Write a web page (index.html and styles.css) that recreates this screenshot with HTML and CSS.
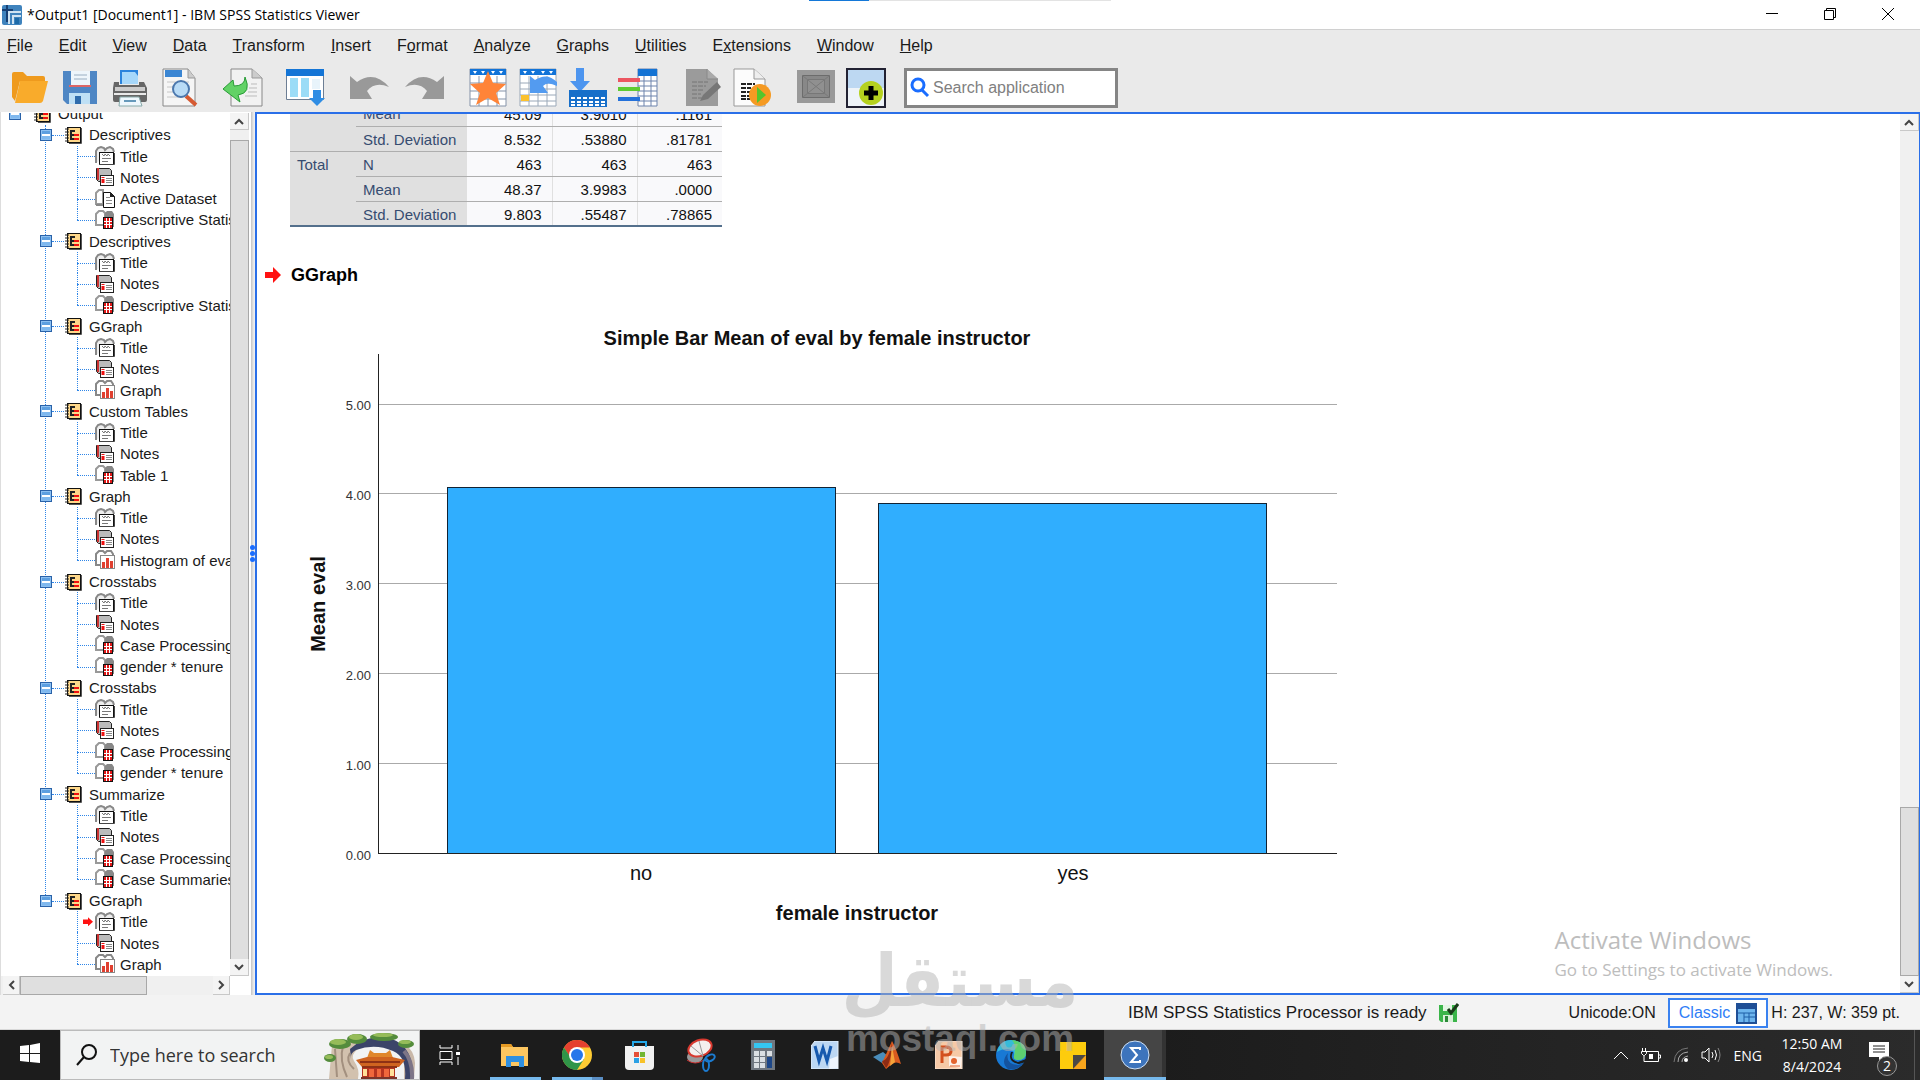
FILE: index.html
```html
<!DOCTYPE html>
<html lang="en">
<head>
<meta charset="utf-8">
<meta name="viewport" content="width=device-width, initial-scale=1">
<title>*Output1 [Document1] - IBM SPSS Statistics Viewer</title>
<link rel="stylesheet" href="styles.css">
</head>
<body>

<!-- icons shared by the outline rows -->
<svg class="defs" width="0" height="0">
  <symbol id="i-book" viewBox="0 0 18 18">
    <rect x="2" y="1" width="14" height="16" fill="#111"/><rect x="3" y="2" width="12" height="14" fill="#ffd88a"/>
    <path d="M16.500 2v15.500H4" fill="none" stroke="#555"/>
    <path d="M0 3h4M0 6h4M0 9h4M0 12h4M0 15h4" stroke="#222"/>
    <path d="M10 5H6v8h4M6 9h3" fill="none" stroke="#222" stroke-width="2"/>
    <path d="M9 8h5v2H9zM9 12h5v2H9z" fill="#f01010"/>
  </symbol>
  <symbol id="i-title" viewBox="0 0 20 20">
    <path d="M1 17V5l2-3 3-1 3 1 1 2 2-2 3-1 3 2 1 3" fill="#eee" stroke="#888" stroke-width="2"/>
    <rect x="4.500" y="6.500" width="14" height="12" fill="#fff" stroke="#111"/>
    <path d="M4 18.500h15.500V7" fill="none" stroke="#444"/>
    <path d="M7 8l2 2 1-2 2 2 1-2 2 2" fill="none" stroke="#777"/><path d="M7 12.500h9M7 15.500h6" stroke="#777"/>
  </symbol>
  <symbol id="i-notes" viewBox="0 0 20 20">
    <path d="M1.500 1.500h13l2 2v11h-13l-2-2z" fill="#bbb" stroke="#222"/><path d="M3 1v12" stroke="#c33" stroke-width="2"/>
    <rect x="5.500" y="8.500" width="13" height="10" fill="#fff" stroke="#222"/>
    <path d="M8 10v1M8 12v4" stroke="#e11" stroke-width="3"/><path d="M11 11.500h6M11 13.500h6M11 15.500h6" stroke="#888"/>
  </symbol>
  <symbol id="i-data" viewBox="0 0 20 20">
    <path d="M1 15V4l3-3h4v14z" fill="#fff" stroke="#999" stroke-width="2"/><path d="M1 16h7" stroke="#888" stroke-width="2"/>
    <path d="M8.500 3.500h7l4 4v11h-11z" fill="#fff" stroke="#111"/><path d="M15 3v5h5z" fill="#222"/>
    <path d="M11 8.500h4M11 11.500h6M11 14.500h6" stroke="#888"/>
  </symbol>
  <symbol id="i-table" viewBox="0 0 20 20">
    <path d="M1 15V4l3-3h4l2 2v12z" fill="#fff" stroke="#999" stroke-width="2"/><path d="M10 3l2-2h5l2 3v13h-9z" fill="#888"/>
    <rect x="8.500" y="7.500" width="9" height="11" fill="#e01818" stroke="#111"/>
    <path d="M9 11.500h8M9 14.500h8M11.500 8v10M14.500 8v10" stroke="#fff"/>
  </symbol>
  <symbol id="i-graph" viewBox="0 0 20 20">
    <path d="M1 15V4l3-3h4l2 2 2-2h4l2 3v11z" fill="#fff" stroke="#888" stroke-width="2"/>
    <rect x="5.500" y="5.500" width="14" height="13" fill="#fff" stroke="#888"/>
    <path d="M7 12h3v6H7zM11 8h3v10h-3zM15 11h3v7h-3z" fill="#e04030"/>
  </symbol>
</svg>

<header class="titlebar">
  <svg class="app-icon" width="20" height="20" viewBox="0 0 20 20"><rect width="20" height="20" rx="2" fill="#3f83bd"/><path d="M0 5h11M5 0v17" stroke="#173f73" stroke-width="2"/><path d="M7 19V7h12M11 19v-8h8" fill="none" stroke="#cfe3f2" stroke-width="2"/><path d="M15 13v6" stroke="#1c6aa8" stroke-width="4"/></svg>
  <h1>*Output1 [Document1] - IBM SPSS Statistics Viewer</h1>
  <div class="progress"><span></span></div>
  <div class="window-buttons">
    <button type="button" aria-label="Minimize"><svg width="12" height="12"><path d="M0 5.500h12" stroke="#000"/></svg></button>
    <button type="button" aria-label="Restore"><svg width="12" height="12"><path d="M.5 2.500h9v9h-9zM2.500 2V.5h9v9H10" fill="none" stroke="#000"/></svg></button>
    <button type="button" aria-label="Close"><svg width="12" height="12"><path d="M0 0l12 12M12 0L0 12" stroke="#000"/></svg></button>
  </div>
</header>

<nav class="menubar">
  <a href="#"><u>F</u>ile</a><a href="#"><u>E</u>dit</a><a href="#"><u>V</u>iew</a><a href="#"><u>D</u>ata</a><a href="#"><u>T</u>ransform</a><a href="#"><u>I</u>nsert</a><a href="#">F<u>o</u>rmat</a><a href="#"><u>A</u>nalyze</a><a href="#"><u>G</u>raphs</a><a href="#"><u>U</u>tilities</a><a href="#">E<u>x</u>tensions</a><a href="#"><u>W</u>indow</a><a href="#"><u>H</u>elp</a>
</nav>

<div class="toolbar">
  <div class="group">
    <button type="button" aria-label="Open"><svg viewBox="0 0 40 40"><path d="M2 6q0-2 2-2h9l4 4h16q2 0 2 2v3H10L5 33 2 29z" fill="#ef9a1d"/><path d="M10 13h28l-5 20q-1 2-3 2H5z" fill="#f9ab2b"/></svg></button>
    <button type="button" aria-label="Save"><svg viewBox="0 0 40 40"><path d="M3 3h34v33H7l-4-4z" fill="#4e86c4"/><path d="M11 3h19v14H11z" fill="#eef5fb"/><path d="M14 7h13M14 11h13" stroke="#9aaec2"/><path d="M9 18h22" stroke="#d66" stroke-width="2"/><path d="M9 25h21v11H9z" fill="#bfe0f5"/><path d="M15 28h6v8h-6z" fill="#2f6cac"/></svg></button>
    <button type="button" aria-label="Print"><svg viewBox="0 0 40 40"><path d="M10 2h18v14H10z" fill="#2b83dc"/><path d="M12 4h13l3 4v8H12z" fill="#a6d7fa"/><path d="M4 14h5v3h20v-3h5l3 6v12q0 2-2 2H5q-2 0-2-2V20z" fill="#666"/><path d="M5 19h30v4H5z" fill="#ccc"/><path d="M4 25h32v2H4z" fill="#e9e9e9"/><path d="M10 29h19l3 9H9z" fill="#eef7fd" stroke="#8aa"/><path d="M14 33h12" stroke="#69b" stroke-width="2"/></svg></button>
    <button type="button" aria-label="Print Preview"><svg viewBox="0 0 40 40"><path d="M3 1h25l7 9v28H3z" fill="#f5f5f5" stroke="#888"/><path d="M28 1v9h7" fill="#ccc" stroke="#999"/><path d="M5 2h17v7H5z" fill="#3b86d3"/><path d="M7 14h22M7 19h22M7 24h20M7 29h16" stroke="#c6c6c6"/><path d="M26 28l10 9" stroke="#d65a32" stroke-width="4"/><circle cx="21" cy="21" r="8" fill="#b9dbf6" stroke="#4b77ad" stroke-width="2"/></svg></button>
  </div>
  <div class="group">
    <button type="button" aria-label="Export"><svg viewBox="0 0 40 40"><path d="M8 1h21l10 9v28H8z" fill="#f2f2f2" stroke="#888"/><path d="M29 1v9h10" fill="#ccc" stroke="#999"/><path d="M28 16h6M26 20h8M25 24h9M22 28h12" stroke="#bbb"/><path d="M22 9q7 16-7 18l2 7L0 21l10-9 1 6q11 0 11-9z" fill="#62d266" stroke="#289b36"/></svg></button>
  </div>
  <div class="group">
    <button type="button" aria-label="Recall Dialogs"><svg viewBox="0 0 40 40"><path d="M.5 1.500h37v30h-37z" fill="#fff" stroke="#6d7e94"/><path d="M0 1h38v7H0z" fill="#1475d6"/><path d="M4 10h8v19H4zM15 10h8v19h-8z" fill="#9bdcf7"/><path d="M26 11h8v10h-8z" fill="#e8f4fb"/><path d="M27 22h8v8h4l-8 8-8-8h4z" fill="#2f8de4"/></svg></button>
  </div>
  <div class="group wide">
    <button type="button" aria-label="Undo"><svg viewBox="0 0 40 40"><path d="M1 8l7 6q17-12 32 5-14-6-22 4l5 8H1z" fill="#999"/></svg></button>
    <button type="button" aria-label="Redo"><svg viewBox="0 0 40 40"><path d="M39 8l-7 6Q15 2 0 19q14-6 22 4l-5 8h22z" fill="#999"/></svg></button>
  </div>
  <div class="group">
    <button type="button" aria-label="Go to Data"><svg viewBox="0 0 40 40"><path d="M2 1h36v37H2z" fill="#fff" stroke="#8593a8"/><path d="M11 8v30M20 8v30M29 8v30M2 15h36M2 23h36M2 31h36" stroke="#8593a8"/><path d="M2 1h36v6H2z" fill="#1173d8"/><path d="M5 3h4l-2 3zM13 3h4l-2 3zM23 3h4l-2 3zM31 3h4l-2 3z" fill="#fff"/><path d="M20 3l5 12 13 1-10 9 4 12-12-7-12 7 4-12-10-9 13-1z" fill="#ff8438"/></svg></button>
    <button type="button" aria-label="Go to Case"><svg viewBox="0 0 40 40"><path d="M2 1h36v37H2z" fill="#fff" stroke="#9aa8b8"/><path d="M11 8v30M20 8v30M29 8v30M2 15h36M2 21h36M2 27h36M2 33h36" stroke="#9aa8b8"/><path d="M2 1h36v6H2z" fill="#1173d8"/><path d="M5 3h4l-2 3zM13 3h4l-2 3zM23 3h4l-2 3zM31 3h4l-2 3z" fill="#fff"/><path d="M12 8l5 4q12-8 22 2v4q-10-5-14 0l5 7H12z" fill="#539bf0"/><path d="M3 27h8v6H3z" fill="#fbc12e"/></svg></button>
    <button type="button" aria-label="Variables"><svg viewBox="0 0 40 40"><path d="M8 0h8v13h6L12 24 2 13h6z" fill="#4d95ef"/><path d="M1 22h38v17H1z" fill="#176fc9"/><path d="M3 30h34M3 34h34M3 37h34" stroke="#fff" stroke-width="2" stroke-dasharray="4 2"/></svg></button>
    <button type="button" aria-label="Use Sets"><svg viewBox="0 0 40 40"><path d="M20 1h19v37H20z" fill="#fff" stroke="#6d83ac"/><path d="M26 8v30M33 8v30M20 13h19M20 18h19M20 23h19M20 28h19M20 33h19" stroke="#6d83ac"/><path d="M20 1h19v7H20z" fill="#1473d4"/><path d="M0 10h22v4H0z" fill="#ec5661"/><path d="M0 19h22v4H0z" fill="#5ecb32"/><path d="M0 29h22v4H0z" fill="#2471da"/></svg></button>
  </div>
  <div class="group last">
    <button type="button" aria-label="Edit Output"><svg viewBox="0 0 40 40"><path d="M3 1h21l11 10v27H3z" fill="#9b9b9b"/><path d="M24 1v10h11" fill="#aaa" stroke="#888"/><path d="M9 14h16M9 18h14M9 22h11M9 26h9M9 30h10" stroke="#757575" stroke-dasharray="5 1"/><path d="M34 14l4 5-13 12-8 2 3-6z" fill="#777"/></svg></button>
    <button type="button" aria-label="Run Script"><svg viewBox="0 0 40 40"><path d="M1 1h20l11 10v27H1z" fill="#fcfcfc" stroke="#999"/><path d="M21 1v10h11" fill="#eee" stroke="#999"/><path d="M8 16h14M8 20h10M8 24h10M8 28h9M8 31h9" stroke="#222" stroke-width="2" stroke-dasharray="5 1"/><circle cx="27" cy="27" r="11" fill="#f59a23"/><path d="M24 19l9 8-9 8z" fill="#55c52c"/></svg></button>
  </div>
  <div class="group">
    <button type="button" aria-label="Select Last Output"><svg viewBox="0 0 40 40"><path d="M1 2h38v33H1z" fill="#999"/><path d="M6.500 7.500h27v22h-27z" fill="#888" stroke="#6c6c6c"/><path d="M11.500 11.500h17v14h-17z" fill="#909090" stroke="#777"/><path d="M7 8l26 21M33 8L7 29" stroke="#7a7a7a"/></svg></button>
    <button type="button" aria-label="Designate Window"><svg viewBox="0 0 40 40"><path d="M1 1h38v38H1z" fill="#eef3f8"/><path d="M1 1h38v19H1z" fill="#bdd8f2"/><circle cx="25" cy="25" r="12" fill="#b5d11e"/><path d="M25 18v14M18 25h14" stroke="#000" stroke-width="5"/><path d="M1 1h38v38H1z" fill="none" stroke="#223" stroke-width="2"/></svg></button>
  </div>
  <label class="app-search">
    <svg width="22" height="22" viewBox="0 0 22 22"><circle cx="9" cy="8" r="6" fill="none" stroke="#1a6dff" stroke-width="3"/><path d="M13 13l6 6" stroke="#1a6dff" stroke-width="3"/></svg>
    <input type="text" placeholder="Search application" aria-label="Search application">
  </label>
</div>

<div class="workspace">
  <aside class="outline">
    <ul class="tree">
      <li class="root"><button type="button" class="toggle" aria-label="Collapse"></button><svg><use href="#i-book"/></svg>Output</li>
      <li class="branch"><button type="button" class="toggle" aria-label="Collapse"></button><svg><use href="#i-book"/></svg>Descriptives</li>
      <li class="leaf"><svg><use href="#i-title"/></svg>Title</li>
      <li class="leaf"><svg><use href="#i-notes"/></svg>Notes</li>
      <li class="leaf"><svg><use href="#i-data"/></svg>Active Dataset</li>
      <li class="leaf end"><svg><use href="#i-table"/></svg>Descriptive Statistics</li>
      <li class="branch"><button type="button" class="toggle" aria-label="Collapse"></button><svg><use href="#i-book"/></svg>Descriptives</li>
      <li class="leaf"><svg><use href="#i-title"/></svg>Title</li>
      <li class="leaf"><svg><use href="#i-notes"/></svg>Notes</li>
      <li class="leaf end"><svg><use href="#i-table"/></svg>Descriptive Statistics</li>
      <li class="branch"><button type="button" class="toggle" aria-label="Collapse"></button><svg><use href="#i-book"/></svg>GGraph</li>
      <li class="leaf"><svg><use href="#i-title"/></svg>Title</li>
      <li class="leaf"><svg><use href="#i-notes"/></svg>Notes</li>
      <li class="leaf end"><svg><use href="#i-graph"/></svg>Graph</li>
      <li class="branch"><button type="button" class="toggle" aria-label="Collapse"></button><svg><use href="#i-book"/></svg>Custom Tables</li>
      <li class="leaf"><svg><use href="#i-title"/></svg>Title</li>
      <li class="leaf"><svg><use href="#i-notes"/></svg>Notes</li>
      <li class="leaf end"><svg><use href="#i-table"/></svg>Table 1</li>
      <li class="branch"><button type="button" class="toggle" aria-label="Collapse"></button><svg><use href="#i-book"/></svg>Graph</li>
      <li class="leaf"><svg><use href="#i-title"/></svg>Title</li>
      <li class="leaf"><svg><use href="#i-notes"/></svg>Notes</li>
      <li class="leaf end"><svg><use href="#i-graph"/></svg>Histogram of eval</li>
      <li class="branch"><button type="button" class="toggle" aria-label="Collapse"></button><svg><use href="#i-book"/></svg>Crosstabs</li>
      <li class="leaf"><svg><use href="#i-title"/></svg>Title</li>
      <li class="leaf"><svg><use href="#i-notes"/></svg>Notes</li>
      <li class="leaf"><svg><use href="#i-table"/></svg>Case Processing Summary</li>
      <li class="leaf end"><svg><use href="#i-table"/></svg>gender * tenure</li>
      <li class="branch"><button type="button" class="toggle" aria-label="Collapse"></button><svg><use href="#i-book"/></svg>Crosstabs</li>
      <li class="leaf"><svg><use href="#i-title"/></svg>Title</li>
      <li class="leaf"><svg><use href="#i-notes"/></svg>Notes</li>
      <li class="leaf"><svg><use href="#i-table"/></svg>Case Processing Summary</li>
      <li class="leaf end"><svg><use href="#i-table"/></svg>gender * tenure</li>
      <li class="branch"><button type="button" class="toggle" aria-label="Collapse"></button><svg><use href="#i-book"/></svg>Summarize</li>
      <li class="leaf"><svg><use href="#i-title"/></svg>Title</li>
      <li class="leaf"><svg><use href="#i-notes"/></svg>Notes</li>
      <li class="leaf"><svg><use href="#i-table"/></svg>Case Processing Summary</li>
      <li class="leaf end"><svg><use href="#i-table"/></svg>Case Summaries</li>
      <li class="branch"><button type="button" class="toggle" aria-label="Collapse"></button><svg><use href="#i-book"/></svg>GGraph</li>
      <li class="leaf current"><svg><use href="#i-title"/></svg>Title</li>
      <li class="leaf"><svg><use href="#i-notes"/></svg>Notes</li>
      <li class="leaf end"><svg><use href="#i-graph"/></svg>Graph</li>
    </ul>
    <div class="scroll-v">
      <button type="button" aria-label="Scroll up"><svg width="10" height="7"><path d="M1 6l4-4 4 4" /></svg></button>
      <div class="track"><div class="thumb" style="height:99%;margin-top:10px"></div></div>
      <button type="button" aria-label="Scroll down"><svg width="10" height="7"><path d="M1 1l4 4 4-4" /></svg></button>
    </div>
    <div class="scroll-h">
      <button type="button" aria-label="Scroll left"><svg width="7" height="10"><path d="M6 1L2 5l4 4" /></svg></button>
      <div class="track"><div class="thumb" style="width:66%"></div></div>
      <button type="button" aria-label="Scroll right"><svg width="7" height="10"><path d="M1 1l4 4-4 4" /></svg></button>
    </div>
  </aside>

  <div class="splitter"><i></i><i></i><i></i></div>

  <main class="viewer">
    <div class="output">
      <table class="report">
        <tbody>
          <tr><th rowspan="2"></th><th>Mean</th><td>45.09</td><td>3.9010</td><td>.1161</td></tr>
          <tr><th>Std. Deviation</th><td>8.532</td><td>.53880</td><td>.81781</td></tr>
          <tr><th rowspan="3">Total</th><th>N</th><td>463</td><td>463</td><td>463</td></tr>
          <tr><th>Mean</th><td>48.37</td><td>3.9983</td><td>.0000</td></tr>
          <tr><th>Std. Deviation</th><td>9.803</td><td>.55487</td><td>.78865</td></tr>
        </tbody>
      </table>

      <h2><svg width="16" height="16"><path d="M0 5h8V0l8 8-8 8v-5H0z" fill="#f11"/></svg>GGraph</h2>

      <svg class="chart" width="1060" height="610" viewBox="0 0 1060 610">
        <text class="chart-title" x="527" y="22">Simple Bar Mean of eval by female instructor</text>
        <g class="gridlines"><path d="M89 81.500h958M89 170.500h958M89 260.500h958M89 350.500h958M89 440.500h958"/></g>
        <g class="bars"><rect x="157.500" y="164.500" width="388" height="366"/><rect x="588.500" y="180.500" width="388" height="350"/></g>
        <path class="axes" d="M88.500 31v500M88 530.500h959"/>
        <g class="ticks">
          <text x="81" y="87">5.00</text><text x="81" y="177">4.00</text><text x="81" y="267">3.00</text>
          <text x="81" y="357">2.00</text><text x="81" y="447">1.00</text><text x="81" y="537">0.00</text>
        </g>
        <text class="category" x="351" y="557">no</text>
        <text class="category" x="783" y="557">yes</text>
        <text class="axis-title" x="567" y="597">female instructor</text>
        <text class="axis-title" transform="translate(35 281) rotate(-90)">Mean eval</text>
      </svg>

      <div class="activate">
        <p class="big">Activate Windows</p>
        <p>Go to Settings to activate Windows.</p>
      </div>
    </div>
    <div class="scroll-v">
      <button type="button" aria-label="Scroll up"><svg width="10" height="7"><path d="M1 6l4-4 4 4" /></svg></button>
      <div class="track bottom"><div class="thumb" style="height:20%"></div></div>
      <button type="button" aria-label="Scroll down"><svg width="10" height="7"><path d="M1 1l4 4 4-4" /></svg></button>
    </div>
  </main>
</div>

<div class="statusbar">
  <span class="message">IBM SPSS Statistics Processor is ready</span>
  <svg class="ready" width="20" height="20"><path d="M0 2h18v17H2l-2-2z" fill="#3bb54a"/><path d="M4 2h9v6H4z" fill="#e3f5e3"/><path d="M4 12h10v7H4z" fill="#d9f0d9"/><path d="M6 13h3v6H6z" fill="#2a8a38"/><path d="M9 6l3 4 7-9" fill="none" stroke="#1a3a1a" stroke-width="3"/></svg>
  <span>Unicode:ON</span>
  <button type="button" class="classic">Classic<svg width="21" height="21"><path d="M0 0h21v21H0z" fill="#1f4f96"/><path d="M2 6h17v13H2z" fill="#6db5ee"/><path d="M2 10h17M8 10v9M13 10v9M8 14h11" stroke="#1f5fa6"/></svg></button>
  <span>H: 237, W: 359 pt.</span>
</div>

<footer class="taskbar">
  <button type="button" class="start" aria-label="Start"><svg width="20" height="20"><path d="M0 3l9-1v8H0zM10 2l10-2v10H10zM0 11h9v8l-9-1zM10 11h10v9l-10-1z" fill="#fff"/></svg></button>
  <label class="task-search">
    <svg width="22" height="22"><circle cx="13" cy="8" r="7" fill="none" stroke="#111" stroke-width="2"/><path d="M8 13l-7 8" stroke="#111" stroke-width="2"/></svg>
    <input type="text" placeholder="Type here to search" aria-label="Type here to search">
    <svg class="art" width="93" height="48" viewBox="0 0 93 48">
      <path d="M5 48L8 14 24 8q12 6 10 10-8 6-4 12 6 8 4 18z" fill="#d2c1ae"/>
      <path d="M80 14q10 4 11 18l-1 16H80z" fill="#c9b8a8"/>
      <path d="M26 18Q44 2 68 8q22 8 21 40H81q2-22-12-28-18-8-37-1-6 3-5 9z" fill="#3b4469"/>
      <path d="M80 20q9 10 8 28" fill="none" stroke="#7d7587" stroke-width="4"/>
      <path d="M11 18l2 28M19 15q-4 14 4 31M26 22q-5 8 4 16" fill="none" stroke="#a3907f" stroke-width="2"/>
      <g fill="#548c3c"><ellipse cx="16" cy="13" rx="11" ry="5"/><ellipse cx="33" cy="8" rx="10" ry="5"/><ellipse cx="60" cy="6" rx="14" ry="4"/><ellipse cx="82" cy="13" rx="8" ry="4"/><ellipse cx="6" cy="27" rx="6" ry="4"/></g>
      <g fill="#96bc59"><ellipse cx="14" cy="11" rx="8" ry="3"/><ellipse cx="32" cy="6" rx="7" ry="3"/><ellipse cx="59" cy="4" rx="10" ry="2"/><ellipse cx="81" cy="11" rx="6" ry="2"/><ellipse cx="5" cy="26" rx="4" ry="2"/></g>
      <path d="M38 36h33v12H38z" fill="#b5331f"/><path d="M45 38h5v10h-5zM53 38h4v10h-4zM60 38h5v10h-5z" fill="#f0673c"/>
      <path d="M41 38v7M68 38v7" stroke="#ffe09a" stroke-width="4"/>
      <path d="M43 27l3-8 4 3h12l4-3 3 8z" fill="#e0872b"/><path d="M32 29l11-3h25l13 3-6 7H38z" fill="#cf6420"/>
      <path d="M36 31h40M38 36h35" stroke="#8e3115" stroke-width="2"/>
      <path d="M37 47h36" stroke="#7c342a" stroke-width="2"/>
    </svg>
  </label>
  <button type="button" class="task view" aria-label="Task View"><svg width="22" height="20"><path d="M1 0v3h12V0M1 6.500h12v8H1zM1 20v-3h12v3M19 0v5M19 12v8" fill="none" stroke="#fff"/><path d="M17 7h4v3h-4z" fill="#fff"/></svg></button>
  <button type="button" class="task open" aria-label="File Explorer"><svg width="28" height="24"><path d="M0 1h10l2 3h15v19H0z" fill="#fdc660"/><path d="M0 1h10l2 3H0z" fill="#e59a23"/><path d="M5 13h18v11h-5v-5h-8v5H5z" fill="#2f8fe0"/></svg></button>
  <button type="button" class="task open more" aria-label="Chrome"><svg width="30" height="30" viewBox="0 0 30 30"><circle cx="15" cy="15" r="15" fill="#fc3"/><path d="M2 7.500A15 15 0 0128 7.500H15L9 19z" fill="#e5412f"/><path d="M2 7.500A15 15 0 0015 30l7-11-13-1z" fill="#2f9548"/><circle cx="15" cy="15" r="8" fill="#fff"/><circle cx="15" cy="15" r="6" fill="#2777ea"/></svg></button>
  <button type="button" class="task" aria-label="Store"><svg width="29" height="30"><path d="M0 6h29v20q0 4-4 4H4q-4 0-4-4z" fill="#f1f1f1"/><path d="M8 7V2h13v5" fill="none" stroke="#25a8e8" stroke-width="2"/><path d="M9 12h5v5H9z" fill="#e64f37"/><path d="M15 12h5v5h-5z" fill="#72b631"/><path d="M9 18h5v5H9z" fill="#2ba0e5"/><path d="M15 18h5v5h-5z" fill="#f8c229"/></svg></button>
  <button type="button" class="task" aria-label="Snipping Tool"><svg width="30" height="34"><ellipse cx="9" cy="19" rx="8" ry="6" fill="#999"/><path d="M1 22q8 6 17 0" fill="none" stroke="#c33"/><ellipse cx="14" cy="10" rx="12" ry="8" transform="rotate(-20 14 10)" fill="#f4f0ee" stroke="#d8392f" stroke-width="2"/><path d="M5 8l12 10M13 3l4 15" stroke="#999"/><ellipse cx="24" cy="20" rx="5" ry="3" transform="rotate(-25 24 20)" fill="none" stroke="#1c7bd0" stroke-width="2"/><ellipse cx="20" cy="27" rx="3" ry="6" fill="none" stroke="#1c7bd0" stroke-width="2"/></svg></button>
  <button type="button" class="task" aria-label="Calculator"><svg width="24" height="30"><path d="M0 0h24v30H0z" fill="#6f7780"/><path d="M3 3h18v5H3z" fill="#35c6f2"/><path d="M3 11h5v5H3zM9 11h5v5H9zM16 11h5v5h-5zM3 17h5v5H3zM9 17h5v5H9zM3 23h5v5H3zM9 23h5v5H9z" fill="#dadfe3"/><path d="M16 17h5v11h-5z" fill="#1d4788"/></svg></button>
  <button type="button" class="task" aria-label="Word"><svg width="28" height="28"><path d="M4 0h23v28H0V5z" fill="#bcd7f3" stroke="#e9f3fc"/><path d="M4 5l4 15 4-13 4 13 4-15" fill="none" stroke="#1659ae" stroke-width="3"/><path d="M19 18l8-3v12l-9 1z" fill="#eef5fd"/></svg></button>
  <button type="button" class="task" aria-label="MATLAB"><svg width="30" height="30"><path d="M1 17l10-5 5 4-6 7z" fill="#4a8dbb"/><path d="M10 23L20 1q4 7 9 23-5-3-9 0l-6 5z" fill="#d95b1f"/><path d="M20 2q-3 18-10 19l4 7q5-5 6-26z" fill="#8d2c15"/><path d="M20 6l3 16-5 4z" fill="#f5a33a"/></svg></button>
  <button type="button" class="task" aria-label="PowerPoint"><svg width="28" height="28"><path d="M4 0h23v28H0V5z" fill="#f6c9a6" stroke="#fbe8d8"/><path d="M7 22V6h4q5 0 5 4t-5 4H8" fill="none" stroke="#d3501e" stroke-width="3"/><path d="M14 15l13 1-1 11-12-2z" fill="#fdf1ea"/><circle cx="19" cy="20" r="3" fill="#e3632e"/><path d="M15 25h10" stroke="#e3632e"/></svg></button>
  <button type="button" class="task" aria-label="Edge"><svg width="30" height="30" viewBox="0 0 30 30"><circle cx="15" cy="15" r="15" fill="#1879d5"/><path d="M1 12Q4 0 15 0q14 1 15 12 0 8-8 8-5 0-4-5 1-5-6-6-7 0-11 3z" fill="#36bbd8"/><path d="M16 0q14 2 14 12 0 8-8 8-5 0-4-4 3-10-2-16z" fill="#5dcf70"/><path d="M12 13q-3 11 10 12 4-1 6-3-6 9-16 7Q4 22 12 13z" fill="#14539f"/><path d="M17 12q-4 8 5 10l8-3v3l-7 2q-12-2-8-12z" fill="#1c1c1c"/></svg></button>
  <button type="button" class="task" aria-label="Sticky Notes"><svg width="26" height="27"><path d="M0 0h26v13L13 27H0z" fill="#fdcc0d"/><path d="M13 13h13L13 27z" fill="#4a4846"/><path d="M26 13v14H13z" fill="#f8a51c"/></svg></button>
  <button type="button" class="task open active" aria-label="SPSS Statistics"><svg width="30" height="30" viewBox="0 0 30 30"><circle cx="15" cy="15" r="14" fill="#3d74bc" stroke="#cfe0f3"/><path d="M20 10V8h-9l6 7-6 7h9v-2" fill="none" stroke="#fff" stroke-width="2"/></svg></button>
  <div class="tray">
    <svg width="16" height="9"><path d="M1 8l7-7 7 7" fill="none" stroke="#fff" stroke-width="1"/></svg>
    <svg width="20" height="16"><path d="M4.500 4.500h13v10h-11M18 8h1.500v3H18" fill="none" stroke="#fff"/><path d="M8 7h4v5H8z" fill="#fff"/><path d="M.5 4.500h5v2l-2 2h-1l-2-2zM1.500 1v3M4.500 1v3M3 9v5.500h4" fill="none" stroke="#fff"/></svg>
    <svg width="16" height="16"><path d="M1 15Q2 2 15 1" fill="none" stroke="#777"/><path d="M5 15q0-9 10-10M9 15q0-5 6-6" fill="none" stroke="#aaa"/><circle cx="13" cy="13" r="2" fill="#fff"/></svg>
    <svg width="21" height="16"><path d="M1 5h3l4-4v14l-4-4H1z" fill="none" stroke="#fff"/><path d="M11 5q2 3 0 6M14 3q3 5 0 10" fill="none" stroke="#fff"/><path d="M17 1q4 7 0 14" fill="none" stroke="#888"/></svg>
    <span>ENG</span>
  </div>
  <div class="clock">12:50 AM<br>8/4/2024</div>
  <button type="button" class="notify" aria-label="Notifications"><svg width="20" height="19"><path d="M0 0h20v15h-6l-4 4v-4H0z" fill="#fff"/><path d="M4 4h12M4 7h12M4 10h12" stroke="#222"/></svg><span class="badge">2</span></button>
</footer>

<div class="watermark"><span class="ar" lang="ar" dir="rtl">مستقل</span><span>mostaql.com</span></div>

</body>
</html>
```
FILE: styles.css
```css
* {box-sizing: border-box;}

body {
    margin: 0;
    height: 100vh;
    display: flex;
    flex-direction: column;
    overflow: hidden;
    position: relative;
    background: #fff;
    color: #1a1a1a;
    font-family: "Liberation Sans", Arial, sans-serif;
    font-size: 16px;
}

h1, h2, p, ul {margin: 0; padding: 0;}

button {
    margin: 0;
    padding: 0;
    border: none;
    background: none;
    font: inherit;
    color: inherit;
}

input {
    border: none;
    background: none;
    outline: none;
    padding: 0;
    min-width: 0;
    flex: 1;
    font: inherit;
}

.defs {position: absolute;}

/* title bar */
.titlebar {
    height: 30px;
    flex: none;
    display: flex;
    align-items: center;
    padding: 0 3px 0 2px;
    gap: 5px;
    border-bottom: 1px solid #d0d0d0;
}

.titlebar h1 {
    flex: 1;
    font: 14px "Open Sans", sans-serif;
    color: #000;
}

.progress {
    position: absolute;
    top: 0;
    left: 42%;
    width: 302px;
    height: 1px;
    margin-left: 3px;
    background: #e3e3e3;
}

.progress span {
    display: block;
    width: 60px;
    height: 1px;
    background: #1478d8;
}

.window-buttons {display: flex;}

.window-buttons button {width: 58px; height: 26px;}

/* menu and toolbar */
.menubar {
    flex: none;
    height: 34px;
    display: flex;
    align-items: center;
    gap: 26px;
    padding: 0 0 2px 7px;
    background: #eaeaea;
}

.menubar a {color: #1a1a1a; text-decoration: none;}

.toolbar {
    flex: none;
    height: 48px;
    display: flex;
    align-items: flex-start;
    gap: 13px;
    padding: 4px 0 0 5px;
    background: #eaeaea;
}

.group {display: flex;}

.group.wide {gap: 6px;}

.group.last {padding-left: 2px;}

.group button {width: 50px; height: 40px;}

.group svg {width: 40px; height: 40px;}

.app-search {
    display: flex;
    align-items: center;
    gap: 2px;
    width: 214px;
    height: 40px;
    padding-left: 2px;
    background: #fff;
    border: 3px solid #858585;
}

.app-search input::placeholder {color: #808080; opacity: 1;}

/* workspace */
.workspace {
    flex: 1;
    min-height: 0;
    display: flex;
}

.outline {
    width: 249px;
    flex: none;
    display: grid;
    grid-template-columns: 1fr 19px;
    grid-template-rows: 1fr 19px;
    padding-top: 1px;
    border-left: 1px solid #ddd;
    overflow: hidden;
}

.tree {
    position: relative;
    display: grid;
    grid-auto-rows: 1fr;
    margin: -10px 0 1px;
    min-height: 0;
    overflow: hidden;
    list-style: none;
    font-size: 15px;
    clip-path: inset(10px 0 0 0);
}

.tree::before {
    content: "";
    position: absolute;
    left: 44px;
    top: 22px;
    bottom: 74px;
    border-left: 1px dotted #2f86e8;
}

.tree li {
    position: relative;
    display: flex;
    align-items: center;
    min-height: 0;
    white-space: nowrap;
}

.tree svg {width: 20px; height: 20px; flex: none;}

.root {padding-left: 8px;}

.branch {padding-left: 39px;}

.root svg, .branch svg {
    width: 18px;
    height: 18px;
    margin: 0 6px 0 13px;
}

.branch::before {
    content: "";
    position: absolute;
    left: 51px;
    width: 12px;
    top: 50%;
    border-top: 1px dotted #2f86e8;
}

.leaf {padding-left: 94px; gap: 5px;}

.leaf::before {
    content: "";
    position: absolute;
    left: 76px;
    top: 0;
    bottom: 0;
    border-left: 1px dotted #2f86e8;
}

.leaf.end::before {bottom: 50%;}

.leaf::after {
    content: "";
    position: absolute;
    left: 76px;
    width: 18px;
    top: 50%;
    border-top: 1px dotted #2f86e8;
}

.leaf.current::after {
    left: 82px;
    top: 6px;
    width: 10px;
    height: 9px;
    border: none;
    background: #f11;
    clip-path: polygon(0 25%, 50% 25%, 50% 0, 100% 50%, 50% 100%, 50% 75%, 0 75%);
}

.toggle {
    position: relative;
    width: 12px;
    height: 12px;
    border: 1px solid #2a62a8;
    background: linear-gradient(#5d9fe0 4px, #fff 4px, #fff 6px, #7fb8ee 6px);
    box-shadow: inset 0 0 0 1px #8cc0f2;
}

.scroll-v {
    display: flex;
    flex-direction: column;
    width: 19px;
    background: #f0f0f0;
}

.scroll-h {display: flex; background: #f0f0f0; padding-left: 2px;}

.scroll-v button, .scroll-h button {
    flex: none;
    display: flex;
    align-items: center;
    justify-content: center;
    width: 17px;
    height: 17px;
    background: #f4f4f4;
    border: solid #c8c8c8;
    border-width: 0 1px 1px 0;
}

.scroll-v button {width: 19px;}

.scroll-h button {height: 19px;}

.scroll-v svg, .scroll-h svg {fill: none; stroke: #444; stroke-width: 2;}

.track {flex: 1; display: flex; min-height: 0; overflow: hidden;}

.track.bottom {align-items: flex-end;}

.thumb {background: #dfdfdf; border: 1px solid #a8a8a8;}

.scroll-v .thumb {width: 100%;}

.splitter {
    width: 6px;
    flex: none;
    display: flex;
    flex-direction: column;
    align-items: flex-end;
    justify-content: center;
    gap: 1px;
    background: linear-gradient(90deg, #fff 2px, #c4c4c4 2px, #eee 5px);
}

.splitter i {
    width: 5px;
    height: 5px;
    border-radius: 50%;
    background: #1a6dff;
}

.viewer {
    flex: 1;
    min-width: 0;
    display: flex;
    position: relative;
    border: 2px solid #2a6fe8;
    border-width: 2px 1px 2px 2px;
}

.output {flex: 1; min-width: 0; overflow: hidden; padding-left: 8px;}

/* pivot table */
.report {
    margin: -13px 0 0 25px;
    border-collapse: collapse;
    border-bottom: 2px solid #54708c;
    font-size: 15px;
    color: #111;
    white-space: nowrap;
}

.report th, .report td {
    height: 25px;
    padding: 4px 10px 2px 7px;
    border-bottom: 1px solid #aeaeae;
    line-height: 17px;
}

.report th {
    width: 111px;
    background: #e0e0e0;
    color: #364c70;
    font-weight: normal;
    text-align: left;
    vertical-align: top;
}

.report th[rowspan] {width: 66px; padding-right: 0;}

.report td {
    width: 85px;
    background: #f9f9fb;
    text-align: right;
    border-right: 1px solid #e0e0e0;
}

.report td:last-child {border-right: none;}

.report tr:last-child > * {border-bottom: none;}

.output h2 {
    display: flex;
    align-items: center;
    gap: 10px;
    margin-top: 37px;
    line-height: 22px;
    font-size: 18px;
    color: #000;
}

/* chart */
.chart {display: block; margin: 37px 0 0 25px;}

.chart text {text-anchor: middle; font-size: 20px; fill: #111;}

.chart .chart-title, .chart .axis-title {font-weight: bold;}

.chart .ticks text {text-anchor: end; font-size: 13px; fill: #333;}

.gridlines path {stroke: #aaa;}

.bars rect {fill: #30aefe; stroke: #123;}

.axes {stroke: #222; fill: none;}

.activate {
    position: absolute;
    right: 86px;
    bottom: 10px;
    font-family: "Open Sans", sans-serif;
    font-size: 17px;
    line-height: 26px;
    color: #bdbdbd;
}

.activate .big {font-size: 24px; line-height: 34px;}

/* status bar */
.statusbar {
    flex: none;
    height: 35px;
    display: flex;
    align-items: center;
    justify-content: flex-end;
    gap: 12px;
    padding: 2px 20px 0 0;
    background: #f3f3f3;
    border-bottom: 1px solid #d8d8d8;
}

.message {font-size: 17px;}

.ready {margin-right: 98px;}

.classic {
    display: flex;
    align-items: center;
    gap: 6px;
    height: 30px;
    padding: 0 9px 0 9px;
    margin-right: -9px;
    background: #fff;
    border: 2px solid #3a82f0;
    color: #2f7df6;
}

/* taskbar */
.taskbar {
    flex: none;
    height: 50px;
    display: flex;
    background: linear-gradient(90deg, #1c1c1c 60%, #2b2b2b);
    color: #fff;
    font-family: "Open Sans", sans-serif;
    font-size: 14px;
}

.start {width: 60px;}

.task-search {
    position: relative;
    display: flex;
    align-items: center;
    gap: 12px;
    width: 360px;
    padding-left: 15px;
    background: #f2f3f3;
    border: 1px solid #bbb;
    font-size: 18px;
}

.task-search input::placeholder {color: #333; opacity: 1;}

.art {position: absolute; right: 2px; bottom: 0;}

.task {
    width: 62px;
    display: flex;
    align-items: center;
    justify-content: center;
    position: relative;
}

.view {width: 64px; padding-right: 4px;}

.open::after {
    content: "";
    position: absolute;
    left: 6px;
    right: 5px;
    bottom: 0;
    height: 3px;
    background: #76b9ed;
}

.more::after {border-right: 11px solid #5a8ec4;}

.active {background: #454545; box-shadow: inset -4px 0 #333;}

.active::after {left: 0; right: 0;}

.tray {
    display: flex;
    align-items: center;
    gap: 12px;
    margin-left: auto;
}

.clock {
    width: 100px;
    line-height: 23px;
    padding-top: 2px;
    text-align: center;
}

.notify {
    position: relative;
    width: 53px;
    margin-right: 5px;
    border-right: 1px solid #555;
    text-align: left;
    padding: 0 0 4px 7px;
}

.badge {
    position: absolute;
    left: 15px;
    top: 26px;
    width: 20px;
    height: 20px;
    line-height: 18px;
    border: 1px solid #999;
    border-radius: 50%;
    background: #333;
    text-align: center;
}

.watermark {
    position: absolute;
    left: 50%;
    bottom: 21px;
    transform: translateX(-50%);
    display: flex;
    flex-direction: column;
    align-items: center;
    font-weight: bold;
    font-size: 37px;
    line-height: 40px;
    color: #b4b4b4;
    opacity: 0.5;
    pointer-events: none;
}

.ar {font-family: "DejaVu Sans Condensed", "DejaVu Sans", sans-serif; font-size: 72px; line-height: 76px;}
```
